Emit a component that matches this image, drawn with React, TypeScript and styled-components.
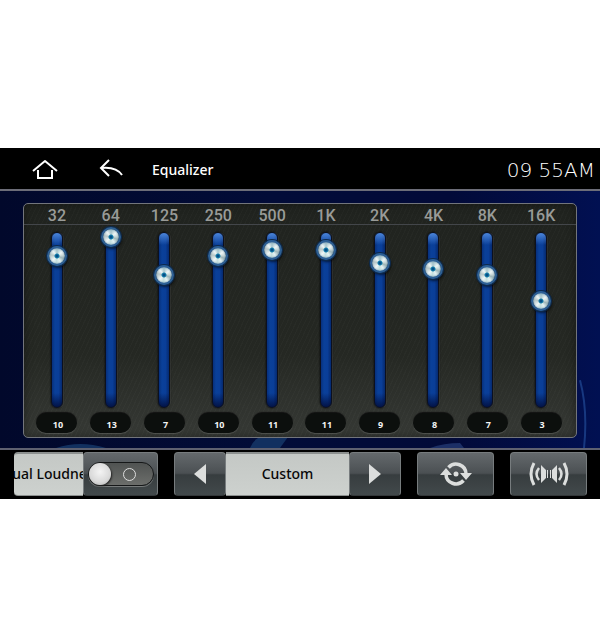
import React, { useState } from "react";
import styled, { createGlobalStyle } from "styled-components";

const GlobalStyle = createGlobalStyle`
  *, *::before, *::after { box-sizing: border-box; }
  body { margin: 0; background: #fff; }
  button, input { margin: 0; font: inherit; }
`;

const Page = styled.main`
  padding: 148px 0 135px;
  font-family: "Noto Sans", "Open Sans", sans-serif;
`;

const Screen = styled.section`
  display: flex;
  flex-direction: column;
  background: #000;
`;

const TopBar = styled.header`
  display: flex;
  align-items: center;
  height: 43px;
  padding: 0 5px 0 31px;
  border-bottom: 2px solid #6c6d78;
  color: #fff;
`;

const NavButton = styled.button`
  display: grid;
  place-items: center;
  width: 28px;
  height: 32px;
  margin-right: 38px;
  padding: 0;
  border: 0;
  background: none;
  color: #fff;
`;

const Title = styled.h1`
  flex: 1;
  margin: 0 0 0 -11px;
  padding-top: 2px;
  font-size: 14px;
  font-weight: 500;
  line-height: 20px;
`;

const Clock = styled.time`
  padding-top: 3px;
  font-family: "DejaVu Sans", sans-serif;
  font-size: 20px;
  font-weight: 200;
  line-height: 20px;
`;

const Stage = styled.div`
  position: relative;
  padding: 12px 23px 10px;
  border-bottom: 2px solid #5f6170;
  background: linear-gradient(90deg, #01082b 0%, #020c38 45%, #020a38 75%, #011052 100%);
`;

const Backdrop = styled.svg`
  position: absolute;
  inset: 0;
  width: 100%;
  height: 100%;
`;

const Panel = styled.div`
  position: relative;
  border: 1px solid #72757c;
  border-radius: 5px;
  background:
    repeating-linear-gradient(115deg, rgba(255, 255, 255, 0.02) 0 1px, transparent 1px 4px),
    linear-gradient(#20231f, #252823 65%, #363935);
  box-shadow: inset 0 0 8px rgba(0, 0, 0, 0.4);
`;

const Bands = styled.div`
  display: grid;
  grid-template-columns: repeat(10, 1fr);
`;

const BandGroup = styled.div`
  padding: 0 8px 0 6px;
  background: linear-gradient(#43464a, #43464a) 0 20px / 100% 1px no-repeat;
`;

const Band = styled.div`
  display: flex;
  flex-direction: column;
  align-items: center;
`;

const Frequency = styled.label`
  height: 23px;
  color: #999b98;
  font-family: Roboto, "Liberation Sans", sans-serif;
  font-size: 16px;
  font-weight: 500;
  line-height: 24px;
`;

const Fader = styled.div`
  display: grid;
  place-items: center;
  height: 186px;
`;

const Groove = styled.div`
  grid-area: 1 / 1;
  width: 12px;
  height: 176px;
  border: 1px solid #0b1020;
  border-radius: 6px;
  background:
    linear-gradient(rgba(90, 150, 235, 0.8), transparent 12px, transparent 160px, rgba(0, 8, 50, 0.8)),
    linear-gradient(90deg, #07307c, #0a4099 30%, #0a3e98 65%, #052a70);
  box-shadow: 0 0 2px #000, 1px 0 0 rgba(255, 255, 255, 0.12);
`;

const Slider = styled.input`
  grid-area: 1 / 1;
  width: 20px;
  height: 186px;
  appearance: none;
  background: none;
  writing-mode: vertical-lr;
  direction: rtl;

  &::-webkit-slider-runnable-track {
    width: 20px;
    background: none;
  }

  &::-webkit-slider-thumb {
    appearance: none;
    width: 20px;
    height: 20px;
    border: 2px solid #2d6095;
    border-radius: 50%;
    background:
      radial-gradient(circle, #064f88 0 1px, #1783ad 2px, transparent 3px),
      conic-gradient(#a4c3cb, #eef6f6 50deg, #cfdddd 80deg, #9db5b8 110deg, #e4f2f2 150deg, #c4dfdf 185deg, #eef6f6 225deg, #b7c6c7 280deg, #eef6f6 320deg, #a4c3cb);
    background-clip: padding-box;
    box-shadow: 0 0 0 1px #0e2a4c, 1px 2px 3px rgba(0, 0, 0, 0.7), inset 0 0 2px #174c7a;
  }
`;

const Level = styled.output`
  display: grid;
  place-items: center;
  width: 41px;
  height: 20px;
  margin-bottom: 4px;
  padding: 3px 0 0 2px;
  border-radius: 10px;
  background: #0c0f0d;
  box-shadow: 0 1px 1px rgba(255, 255, 255, 0.15), 0 -1px 1px #111;
  color: #f4f4f4;
  font-size: 9px;
  font-weight: 700;
  line-height: 16px;
`;

const BottomBar = styled.footer`
  display: grid;
  grid-template-columns: minmax(0, 144fr) minmax(0, 227fr) minmax(0, 77fr) minmax(0, 77fr);
  gap: 16px;
  padding: 2px 13px 3px 14px;
`;

const Segments = styled.div`
  display: flex;
  height: 44px;
`;

const Readout = styled.span<{ $scrolled?: boolean }>`
  flex: 1;
  min-width: 0;
  overflow: hidden;
  border: solid #8c908f;
  border-width: 2px 0 1px;
  border-radius: ${(p) => (p.$scrolled ? "4px 0 0 4px" : "0")};
  background: linear-gradient(#c4c8c5, #cdd1ce);
  color: #080808;
  font-size: 14px;
  font-weight: 500;
  line-height: 40px;
  text-align: ${(p) => (p.$scrolled ? "left" : "center")};
  text-indent: ${(p) => (p.$scrolled ? "-12px" : "0")};
  white-space: nowrap;
`;

const keyFace = `
  display: grid;
  place-items: center;
  height: 44px;
  padding: 0;
  border: 1px solid #777c7e;
  border-bottom-color: #34383a;
  border-radius: 4px;
  background: linear-gradient(#64696c, #4b5053 48%, #373d3f 52%, #42494b);
  color: #dcdedd;
`;

const KeyButton = styled.button<{ $narrow?: boolean }>`
  ${keyFace}
  width: ${(p) => (p.$narrow ? "52px" : "100%")};
`;

const SwitchPlate = styled.label`
  ${keyFace}
  width: 75px;
`;

const Switch = styled.input`
  display: flex;
  align-items: center;
  justify-content: space-between;
  width: 66px;
  height: 24px;
  padding-right: 17px;
  appearance: none;
  border: 1px solid #151718;
  border-radius: 12px;
  background: linear-gradient(#505352, #6c6e6b);
  box-shadow: 0 1px 0 #777b7b;

  &::before {
    content: "";
    width: 22px;
    height: 22px;
    border-radius: 50%;
    background: radial-gradient(circle at 50% 40%, #f4f4f4, #d9d9d9 60%, #aaa);
    box-shadow: 1px 1px 2px #222;
  }

  &::after {
    content: "";
    width: 13px;
    height: 13px;
    border: 1px solid #dedede;
    border-radius: 50%;
  }

  &:checked { flex-direction: row-reverse; padding: 0 0 0 17px; }
`;

const initialBands = [
  { name: "32", level: 10 },
  { name: "64", level: 13 },
  { name: "125", level: 7 },
  { name: "250", level: 10 },
  { name: "500", level: 11 },
  { name: "1K", level: 11 },
  { name: "2K", level: 9 },
  { name: "4K", level: 8 },
  { name: "8K", level: 7 },
  { name: "16K", level: 3 },
];

const HomeIcon = () => (
  <svg width="28" height="22" viewBox="0 0 28 22" fill="none" stroke="currentColor" strokeWidth="2">
    <path d="M2 13 14 3l12 10" strokeLinejoin="round" />
    <path d="M7 12v8h14v-8" />
  </svg>
);

const BackIcon = () => (
  <svg width="28" height="22" viewBox="0 0 28 22" fill="none" stroke="currentColor" strokeWidth="2">
    <path d="M12 2 4 10l8 8" />
    <path d="M4 10c9-1 17 1 21 7" />
  </svg>
);

const Arrow = ({ right }: { right?: boolean }) => (
  <svg width="14" height="22" viewBox="0 0 14 22" fill="currentColor">
    <path d={right ? "M1 1v20l12-10z" : "M13 1v20L1 11z"} />
  </svg>
);

const ResetIcon = () => (
  <svg width="34" height="26" viewBox="0 0 34 26" fill="currentColor">
    <g fill="none" stroke="currentColor" strokeWidth="3.500">
      <path d="M9.500 6.500A10 10 0 0 1 27 13" />
      <path d="M24.500 19.500A10 10 0 0 1 7 13" />
    </g>
    <path d="M1 14 7 7l6 7zM33 12l-6 7-6-7z" />
    <circle cx="17" cy="13" r="2.500" />
  </svg>
);

const SpeakersIcon = () => (
  <svg width="40" height="26" viewBox="0 0 40 26">
    <g fill="none" stroke="currentColor" strokeWidth="3">
      <path d="M5 2Q-1 13 5 24M35 2Q41 13 35 24" />
      <path d="M10 7Q5 13 10 19M30 7Q35 13 30 19" strokeWidth="2.500" />
    </g>
    <path fill="currentColor" d="M12 4l5 5v8l-5 5zM28 4l-5 5v8l5 5zM18 9h1v8h-1zM21 9h1v8h-1z" />
  </svg>
);

export default function App() {
  const [bands, setBands] = useState(initialBands);
  const [loud, setLoud] = useState(false);

  const setLevel = (index: number, level: number) =>
    setBands((all) => all.map((band, i) => (i === index ? { ...band, level } : band)));

  return (
    <Page>
      <GlobalStyle />
      <Screen>
        <TopBar>
          <NavButton aria-label="Home"><HomeIcon /></NavButton>
          <NavButton aria-label="Back"><BackIcon /></NavButton>
          <Title>Equalizer</Title>
          <Clock dateTime="09:55">09 55AM</Clock>
        </TopBar>
        <Stage>
          <Backdrop viewBox="0 0 600 258" preserveAspectRatio="none" aria-hidden="true">
            <path d="M56 258q24-8 50 0z" fill="#12305f" />
            <path d="M250 258q4-10 12-11h26l-8 11z" fill="#123060" />
            <path d="M430 258q14-5 30-5l4 5z" fill="#1c2f66" />
            <path d="M580 190q8 30 4 68" fill="none" stroke="#173880" strokeWidth="2" />
          </Backdrop>
          <Panel>
            <BandGroup>
              <Bands>
                {bands.map((band, i) => (
                  <Band key={band.name}>
                    <Frequency htmlFor={`band-${band.name}`}>{band.name}</Frequency>
                    <Fader>
                      <Groove />
                      <Slider
                        id={`band-${band.name}`}
                        type="range"
                        min={-13}
                        max={13}
                        value={band.level}
                        onChange={(e) => setLevel(i, Number(e.target.value))}
                      />
                    </Fader>
                    <Level htmlFor={`band-${band.name}`}>{band.level}</Level>
                  </Band>
                ))}
              </Bands>
            </BandGroup>
          </Panel>
        </Stage>
        <BottomBar>
          <Segments>
            <Readout $scrolled id="loudness">Dual Loudness</Readout>
            <SwitchPlate>
              <Switch
                type="checkbox"
                role="switch"
                aria-labelledby="loudness"
                checked={loud}
                onChange={(e) => setLoud(e.target.checked)}
              />
            </SwitchPlate>
          </Segments>
          <Segments>
            <KeyButton $narrow aria-label="Previous preset"><Arrow /></KeyButton>
            <Readout>Custom</Readout>
            <KeyButton $narrow aria-label="Next preset"><Arrow right /></KeyButton>
          </Segments>
          <KeyButton aria-label="Reset"><ResetIcon /></KeyButton>
          <KeyButton aria-label="Speakers"><SpeakersIcon /></KeyButton>
        </BottomBar>
      </Screen>
    </Page>
  );
}
